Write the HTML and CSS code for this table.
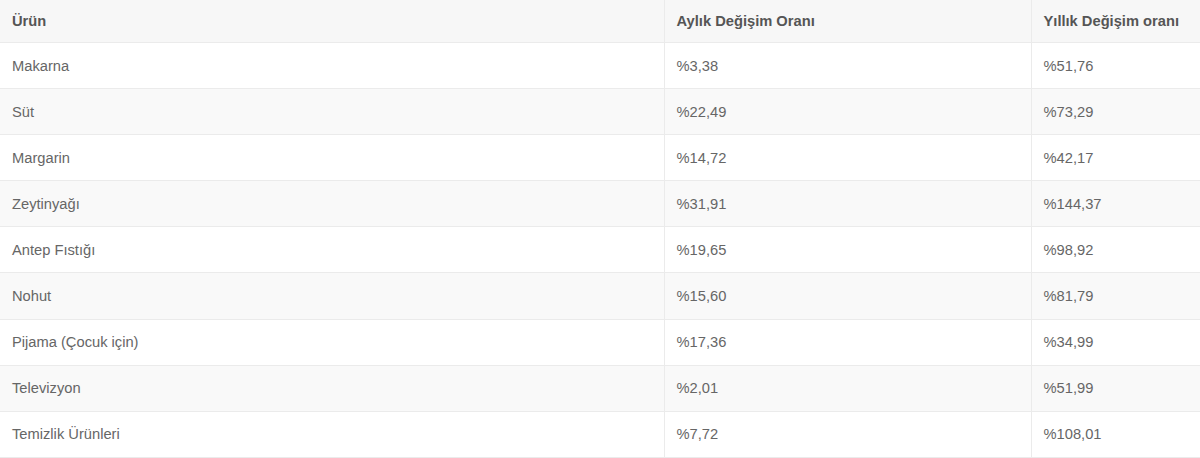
FILE: index.html
```html
<!DOCTYPE html>
<html lang="tr">
<head>
<meta charset="utf-8">
<link rel="stylesheet" href="styles.css">
</head>
<body>
<table class="rates">
  <colgroup>
    <col class="c1"><col class="c2"><col class="c3">
  </colgroup>
  <thead>
    <tr><th>Ürün</th><th>Aylık Değişim Oranı</th><th>Yıllık Değişim oranı</th></tr>
  </thead>
  <tbody>
    <tr><td>Makarna</td><td>%3,38</td><td>%51,76</td></tr>
    <tr><td>Süt</td><td>%22,49</td><td>%73,29</td></tr>
    <tr><td>Margarin</td><td>%14,72</td><td>%42,17</td></tr>
    <tr><td>Zeytinyağı</td><td>%31,91</td><td>%144,37</td></tr>
    <tr><td>Antep Fıstığı</td><td>%19,65</td><td>%98,92</td></tr>
    <tr><td>Nohut</td><td>%15,60</td><td>%81,79</td></tr>
    <tr><td>Pijama (Çocuk için)</td><td>%17,36</td><td>%34,99</td></tr>
    <tr><td>Televizyon</td><td>%2,01</td><td>%51,99</td></tr>
    <tr><td>Temizlik Ürünleri</td><td>%7,72</td><td>%108,01</td></tr>
  </tbody>
</table>
</body>
</html>
```
FILE: styles.css
```css
html, body {
  margin: 0;
  padding: 0;
  background: #fff;
}
body {
  font-family: "Liberation Sans", Arial, sans-serif;
  font-size: 14.7px;
  color: #666;
}
.rates {
  width: 1200px;
  border-collapse: collapse;
  table-layout: fixed;
}
.c1 { width: 664px; }
.c2 { width: 367px; }
.c3 { width: 169px; }
.rates th,
.rates td {
  text-align: left;
  vertical-align: middle;
  padding: 0 12px;
  border-bottom: 1px solid #ebebeb;
  border-left: 1px solid #ebebeb;
}
.rates th:first-child,
.rates td:first-child {
  border-left: none;
}
.rates th {
  height: 42px;
  font-weight: bold;
  color: #555;
  background: #f7f7f7;
}
.rates td {
  height: 45.1px;
}
.rates tbody tr:nth-child(even) td {
  background: #f9f9f9;
}
```
